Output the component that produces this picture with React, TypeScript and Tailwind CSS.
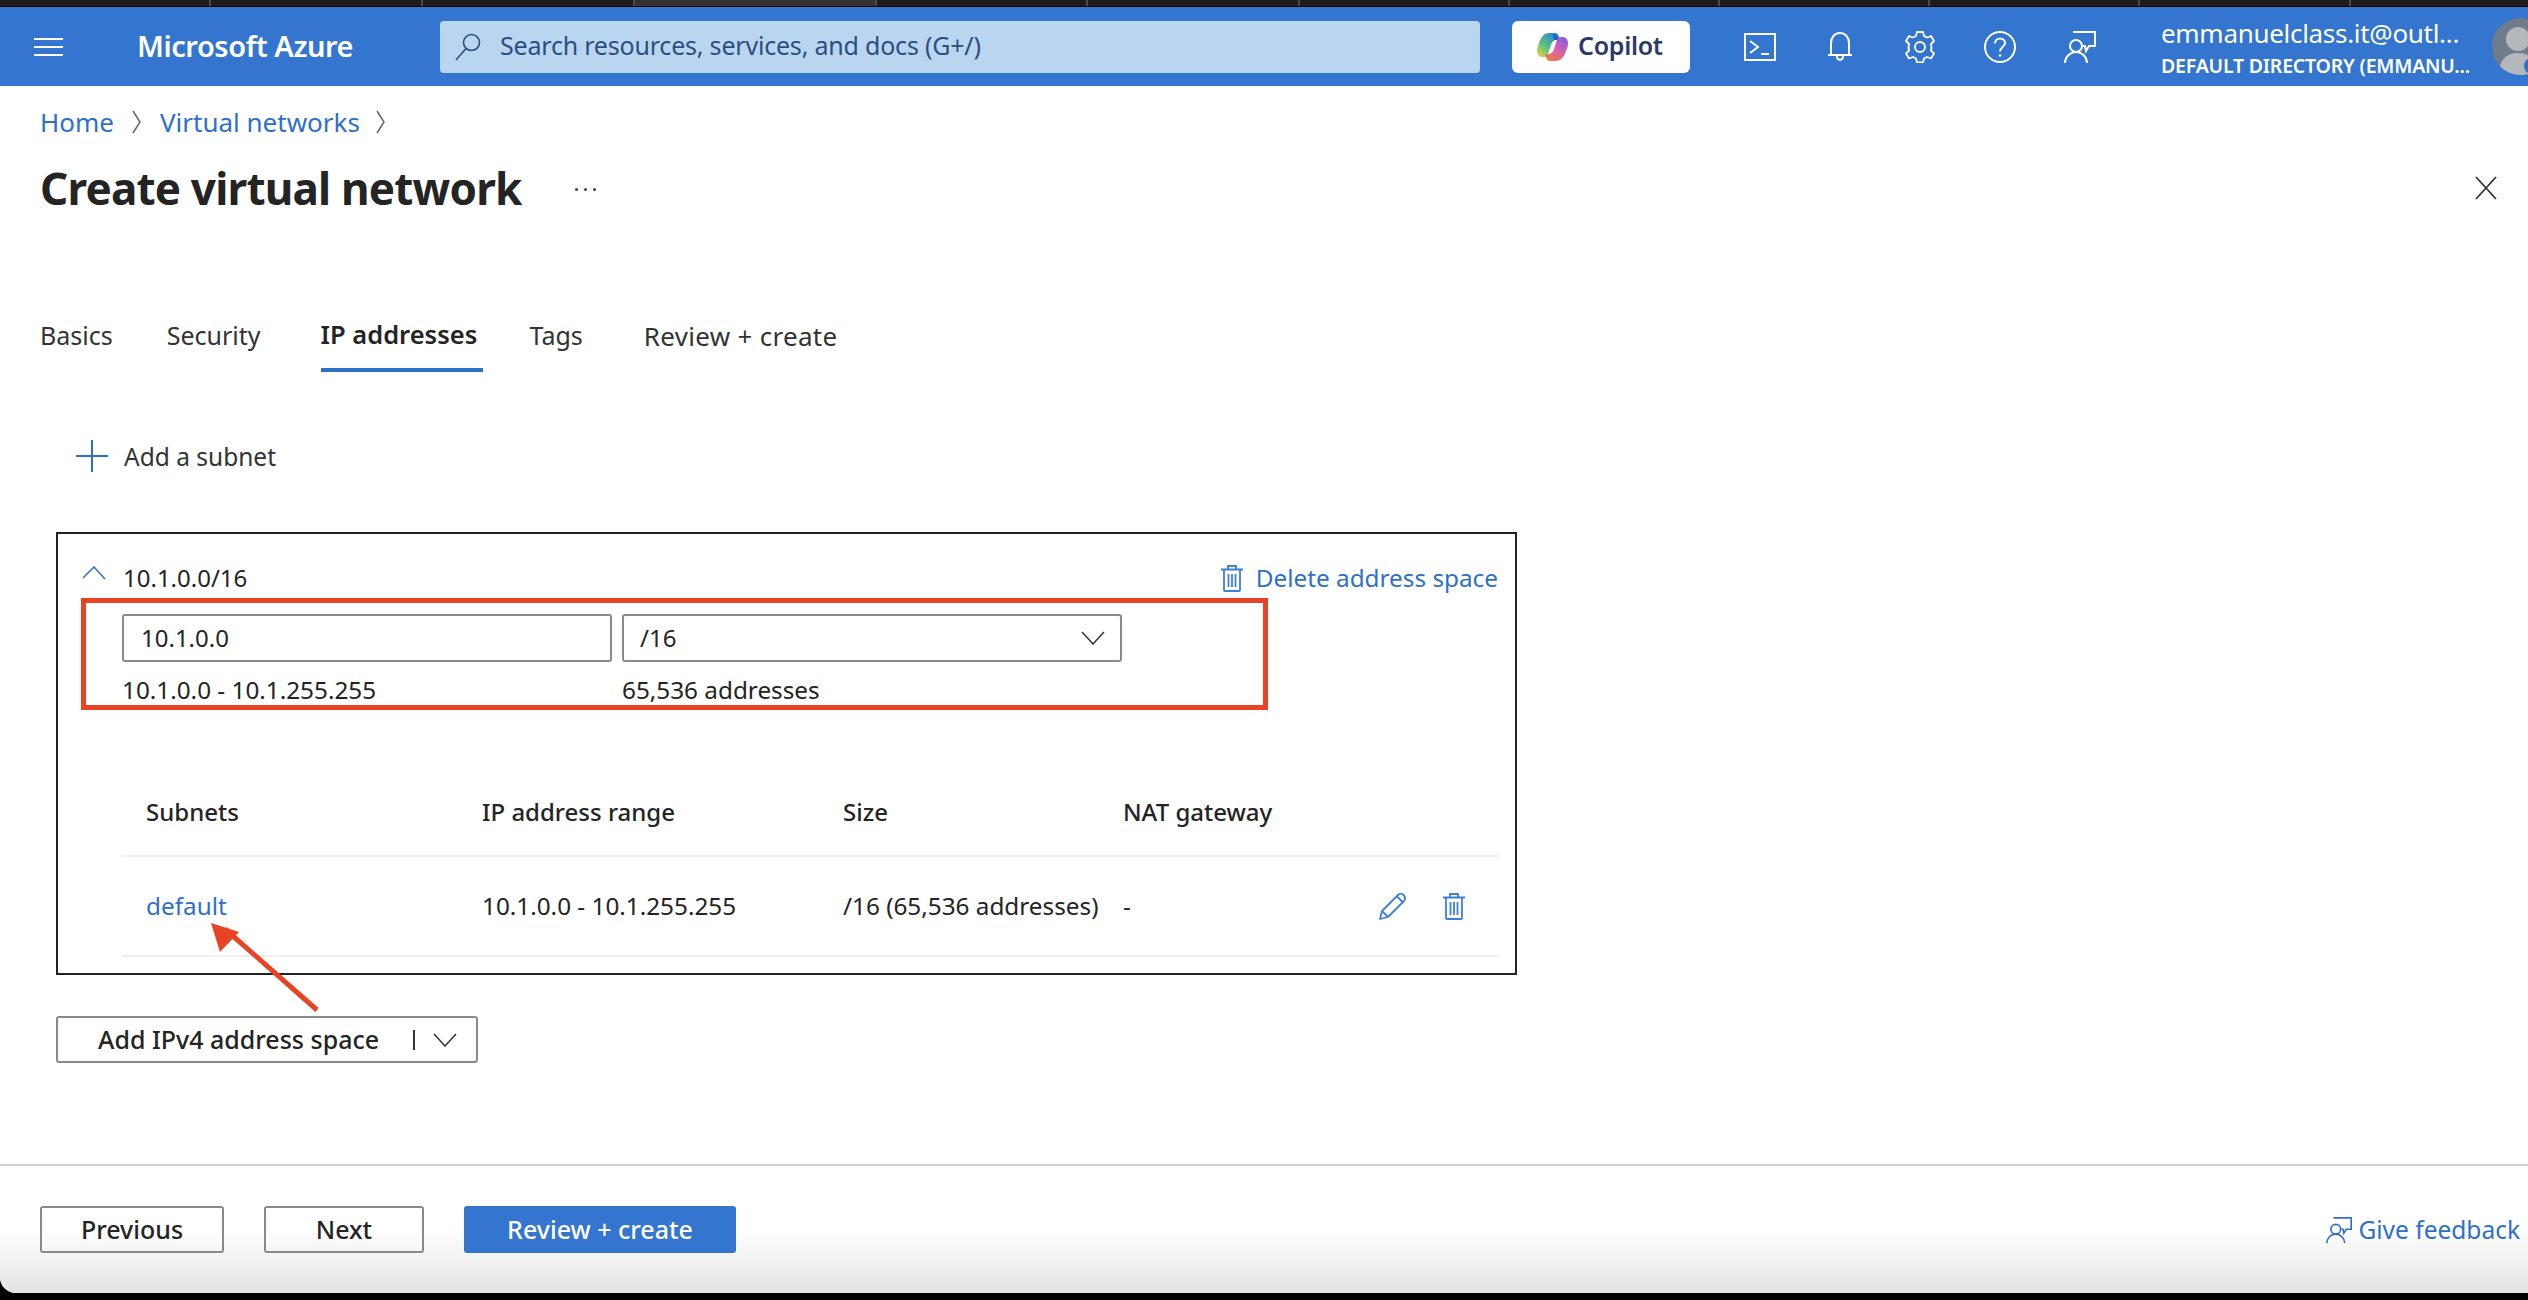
const chromeTabs = [211, 212, 212, 242, 211, 212, 210, 210, 210, 210, 211];
const tableCols = "grid-cols-[336px_361px_280px_1fr]";

function Menu() {
  return (
    <svg width="29" height="18" viewBox="0 0 29 18" fill="none" stroke="#fff" strokeWidth="2">
      <path d="M0 1h29M0 9h29M0 17h29" />
    </svg>
  );
}

function SearchIcon() {
  return (
    <svg className="shrink-0" width="26" height="28" viewBox="0 0 26 28" fill="none" stroke="#2b4f80" strokeWidth="1.6">
      <circle cx="16.5" cy="9.5" r="8" />
      <path d="M11 15.5 1 27" />
    </svg>
  );
}

function CopilotLogo() {
  return (
    <svg className="shrink-0" width="31" height="28" viewBox="0 0 31 28">
      <defs>
        <linearGradient id="cpA" x1="0" y1="1" x2="0.8" y2="0">
          <stop offset="0" stopColor="#f5d33f" />
          <stop offset="0.45" stopColor="#58c27d" />
          <stop offset="1" stopColor="#2a7fe0" />
        </linearGradient>
        <linearGradient id="cpB" x1="0.2" y1="1" x2="0.8" y2="0">
          <stop offset="0" stopColor="#ef7b3c" />
          <stop offset="0.5" stopColor="#d65fb0" />
          <stop offset="1" stopColor="#8a5ce0" />
        </linearGradient>
      </defs>
      <path d="M12 0h6c2 0 3 1 4 4l1 3c-5-1-8 1-9 5l-3 9c-1 2-2 3-4 3H5c-3 0-5-3-5-6 0-2 1-5 2-8 2-6 5-10 10-10z" fill="url(#cpA)" />
      <path d="M16 1c2 0 4 1 5 4l1 2h-5z" fill="#1f5fc8" />
      <path d="M19 28h-6c-2 0-3-1-4-4l-1-3c5 1 8-1 9-5l3-9c1-2 2-3 4-3h2c3 0 5 3 5 6 0 3-1 6-2 8-2 6-5 10-10 10z" fill="url(#cpB)" />
    </svg>
  );
}

function TerminalIcon() {
  return (
    <svg width="32" height="28" viewBox="0 0 32 28" fill="none" stroke="#fff" strokeWidth="2">
      <rect x="1" y="1" width="30" height="26" />
      <path d="m6 8 8 6-8 6M17 21h8" />
    </svg>
  );
}

function BellIcon() {
  return (
    <svg width="24" height="29" viewBox="0 0 24 29" fill="none" stroke="#fff" strokeWidth="2">
      <path d="M3 23V11C3 5 7 1 12 1s9 4 9 10v12M0 23h24M9 24c0 5 6 5 6 0" />
    </svg>
  );
}

function GearIcon() {
  return (
    <svg width="32" height="32" viewBox="0 0 32 32" fill="none" stroke="#fff" strokeWidth="1.8">
      <circle cx="16" cy="16" r="5" />
      <path d="M13 1h6l1 4 3 1.500 4-1.500 3 5-3 3 .5 3.500-.5 3 3 3-3 5-4-1.500-3 1.500-1 4h-6l-1-4-3-1.500-4 1.500-3-5 3-3-.5-3 .5-3.500-3-3 3-5 4 1.500 3-1.500z" strokeLinejoin="round" />
    </svg>
  );
}

function HelpIcon() {
  return (
    <svg width="32" height="32" viewBox="0 0 32 32" fill="none" stroke="#fff" strokeWidth="2">
      <circle cx="16" cy="16" r="15" />
      <path d="M11 12.500c0-3 2.200-5 5-5s5 2 5 4.500c0 4-5 4-5 8.500" />
      <circle cx="16" cy="24.500" r="1.300" fill="#fff" stroke="none" />
    </svg>
  );
}

function FeedbackIcon({ color, size }: { color: string; size: number }) {
  return (
    <svg className="shrink-0" width={size} height={size} viewBox="0 0 32 32" fill="none" stroke={color} strokeWidth="2">
      <path d="M9 1h22v14h-6l-3 5-1-5h-2" />
      <circle cx="12" cy="15" r="6" />
      <path d="M1 32c0-6 5-11 11-11s11 5 11 11" />
    </svg>
  );
}

function Avatar() {
  return (
    <svg className="shrink-0" width="57" height="57" viewBox="0 0 57 57">
      <defs>
        <clipPath id="av">
          <circle cx="28.500" cy="28.500" r="28.500" />
        </clipPath>
      </defs>
      <circle cx="28.500" cy="28.500" r="28.500" fill="#6f7c8b" />
      <g clipPath="url(#av)">
        <circle cx="26" cy="21" r="12" fill="#b4b7bb" />
        <path d="M7 57c0-15 7-22 19-22s19 7 19 22z" fill="#b4b7bb" />
      </g>
      <circle cx="40" cy="48" r="8" fill="#2f6fcc" />
    </svg>
  );
}

function Chevron({ dir, size = 24, color = "#333" }: { dir: "up" | "down" | "right"; size?: number; color?: string }) {
  const d = dir === "up" ? "M1 12 12 1l11 12" : dir === "down" ? "M1 1l11 12L23 1" : "M1 1l7 11-7 11";
  const vb = dir === "right" ? "0 0 9 24" : "0 0 24 14";
  const w = dir === "right" ? 9 : size;
  const h = dir === "right" ? 24 : (size * 14) / 24;
  return (
    <svg className="shrink-0" width={w} height={h} viewBox={vb} fill="none" stroke={color} strokeWidth="1.500">
      <path d={d} />
    </svg>
  );
}

function Trash() {
  return (
    <svg className="shrink-0" width="22" height="27" viewBox="0 0 22 27" fill="none" stroke="#3f7fdc" strokeWidth="1.800">
      <path d="M0 4.500h22M7 4V1h8v3M3 4.500V25a1 1 0 0 0 1 1h14a1 1 0 0 0 1-1V4.500M7.500 9v13M11 9v13M14.500 9v13" />
    </svg>
  );
}

function Pencil() {
  return (
    <svg width="27" height="27" viewBox="0 0 27 27" fill="none" stroke="#3f7fdc" strokeWidth="1.800" strokeLinejoin="round">
      <path d="M1 26 3 18 19 2c2-2 4-1.500 5.500 0S26.500 6 25 8L9 24zM3 18l6 6M18 3.500l5.500 5.500" />
    </svg>
  );
}

export default function App() {
  return (
    <div className="flex h-[1300px] w-[2528px] flex-col overflow-hidden bg-black font-['Noto_Sans',sans-serif] text-[24px] text-[#242424]">
      <div className="flex h-[6px] shrink-0 bg-[#1c1c1c]">
        {chromeTabs.map((w, i) => (
          <div
            key={i}
            style={{ width: w }}
            className={i === 3 ? "border-r-2 border-[#4a4a4a] bg-[#333]" : "border-r-2 border-[#4a4a4a]"}
          />
        ))}
      </div>
      <div className="h-px shrink-0 bg-black" />

      <header className="flex h-[79px] shrink-0 items-center overflow-hidden bg-[#3375cf] text-white">
        <div className="ml-[34px] flex shrink-0">
          <Menu />
        </div>
        <span className="-mt-[2px] ml-[74px] w-[216px] shrink-0 text-[29px] leading-none font-semibold tracking-[-0.45px] whitespace-nowrap">
          Microsoft Azure
        </span>
        <div className="ml-[87px] flex h-[52px] w-[1040px] shrink-0 items-center rounded bg-[#bad5f0] pl-[15px] text-[#2b4f80]">
          <SearchIcon />
          <span className="-mt-[2px] ml-[19px] text-[25px] tracking-[-0.2px]">Search resources, services, and docs (G+/)</span>
        </div>
        <div className="ml-[32px] flex h-[52px] w-[178px] shrink-0 items-center rounded-md bg-white pl-[25px]">
          <CopilotLogo />
          <span className="-mt-[2px] ml-[10px] text-[25px] font-semibold tracking-[-0.3px] text-[#2b3a66]">Copilot</span>
        </div>
        <div className="ml-[54px] flex w-[32px] shrink-0 justify-center">
          <TerminalIcon />
        </div>
        <div className="ml-[52px] flex w-[24px] shrink-0 justify-center">
          <BellIcon />
        </div>
        <div className="ml-[52px] flex w-[32px] shrink-0 justify-center">
          <GearIcon />
        </div>
        <div className="ml-[48px] flex w-[32px] shrink-0 justify-center">
          <HelpIcon />
        </div>
        <div className="ml-[48px] flex w-[32px] shrink-0 justify-center">
          <FeedbackIcon color="#fff" size={32} />
        </div>
        <div className="ml-[65px] flex w-[331px] shrink-0 flex-col pt-[2px]">
          <span className="text-[26px] leading-[34px] tracking-[-0.3px] whitespace-nowrap">emmanuelclass.it@outl...</span>
          <span className="mt-[3px] text-[19.5px] leading-[26px] font-semibold tracking-[-0.2px] whitespace-nowrap">
            DEFAULT DIRECTORY (EMMANU...
          </span>
        </div>
        <Avatar />
      </header>

      <main className="relative flex min-h-0 flex-1 flex-col overflow-hidden rounded-bl-[16px] bg-white">
        <nav className="mt-[21px] flex h-[30px] items-center pl-[40px] text-[26px] text-[#2f6fcc]">
          <span>Home</span>
          <span className="mr-[19px] ml-[18px] flex">
            <Chevron dir="right" color="#666" />
          </span>
          <span>Virtual networks</span>
          <span className="ml-[16px] flex">
            <Chevron dir="right" color="#666" />
          </span>
        </nav>

        <div className="mt-[23px] flex h-[56px] items-center pr-[31px] pl-[40px]">
          <h1 className="text-[44px] leading-none font-bold tracking-[-0.8px] whitespace-nowrap text-[#242424]">Create virtual network</h1>
          <span className="ml-[53px] flex gap-[6px] pt-[3px]">
            <i className="h-[3px] w-[3px] rounded-full bg-[#444]" />
            <i className="h-[3px] w-[3px] rounded-full bg-[#444]" />
            <i className="h-[3px] w-[3px] rounded-full bg-[#444]" />
          </span>
          <svg className="ml-auto" width="22" height="24" viewBox="0 0 22 24" fill="none" stroke="#333" strokeWidth="1.800">
            <path d="m1 1 20 22M21 1 1 23" />
          </svg>
        </div>

        <div className="mt-[92px] flex h-[64px] pl-[40px] text-[25px] text-[#333]">
          <span className="pt-[9px]">Basics</span>
          <span className="ml-[54px] pt-[9px]">Security</span>
          <span className="ml-[60px] w-[162px] border-b-4 border-[#2f6fcc] pt-[7px] text-[25.5px] font-semibold whitespace-nowrap text-[#242424]">
            IP addresses
          </span>
          <span className="ml-[47px] pt-[9px]">Tags</span>
          <span className="ml-[61px] pt-[9px] text-[26px] tracking-[0.3px]">Review + create</span>
        </div>

        <div className="mt-[68px] flex h-[32px] items-center pl-[76px] text-[#333]">
          <svg width="32" height="32" viewBox="0 0 32 32" fill="none" stroke="#2f6fcc" strokeWidth="2">
            <path d="M16 0v32M0 16h32" />
          </svg>
          <span className="mt-[3px] ml-[16px] text-[24.5px]">Add a subnet</span>
        </div>

        <section className="mt-[60px] ml-[56px] flex h-[443px] w-[1461px] flex-col border-2 border-[#222]">
          <div className="mt-[27px] flex h-[34px] items-center pr-[17px] pl-[24px]">
            <span className="-mt-[10px] flex">
              <Chevron dir="up" color="#2f6fcc" />
            </span>
            <span className="ml-[17px]">10.1.0.0/16</span>
            <span className="ml-auto flex items-center text-[24.3px] text-[#2f6fcc]">
              <Trash />
              <span className="ml-[13px]">Delete address space</span>
            </span>
          </div>

          <div className="mt-[3px] ml-[23px] flex h-[112px] w-[1187px] flex-col border-[5px] border-[#e94326] pt-[11px] pl-[36px]">
            <div className="flex gap-[10px]">
              <div className="flex h-[48px] w-[490px] items-center rounded-[3px] border-2 border-[#8a8a8a] pl-[17px]">10.1.0.0</div>
              <div className="flex h-[48px] w-[500px] items-center justify-between rounded-[3px] border-2 border-[#8a8a8a] pr-[15px] pl-[16px]">
                /16
                <Chevron dir="down" />
              </div>
            </div>
            <div className="mt-[10px] flex text-[24.3px]">
              <span className="w-[500px]">10.1.0.0 - 10.1.255.255</span>
              <span>65,536 addresses</span>
            </div>
          </div>

          <div className="mt-[77px] ml-[64px] w-[1376px]">
            <div className={`grid h-[70px] ${tableCols} items-center border-b-2 border-[#efefef] pb-[18px] pl-[24px] font-medium`}>
              <span>Subnets</span>
              <span>IP address range</span>
              <span>Size</span>
              <span>NAT gateway</span>
            </div>
            <div className={`grid h-[100px] ${tableCols} items-center border-b-2 border-[#efefef] pl-[24px] text-[24.3px]`}>
              <span className="text-[#2f6fcc]">default</span>
              <span>10.1.0.0 - 10.1.255.255</span>
              <span>/16 (65,536 addresses)</span>
              <div className="flex items-center justify-between pr-[33px]">
                <span>-</span>
                <span className="flex items-center gap-[37px]">
                  <Pencil />
                  <Trash />
                </span>
              </div>
            </div>
          </div>
        </section>

        <button className="mt-[41px] ml-[56px] flex h-[47px] w-[422px] items-center rounded-[3px] border-2 border-[#8a8a8a] pl-[40px] text-[25px] font-medium text-[#242424]">
          Add IPv4 address space
          <span className="ml-[34px] h-[20px] w-[2px] bg-[#333]" />
          <span className="ml-[18px] flex">
            <Chevron dir="down" />
          </span>
        </button>

        <footer className="mt-[101px] flex min-h-0 flex-1 items-start border-t-2 border-[#d0d0d0] bg-gradient-to-b from-white from-50% to-[#e3e3e3] pt-[40px] pr-[8px] pl-[40px] text-[25px]">
          <button className="h-[47px] w-[184px] rounded-[3px] border-2 border-[#8a8a8a] font-medium">Previous</button>
          <button className="ml-[40px] h-[47px] w-[160px] rounded-[3px] border-2 border-[#8a8a8a] font-medium">Next</button>
          <button className="ml-[40px] h-[47px] w-[272px] rounded-[3px] bg-[#3375cf] font-medium text-white">Review + create</button>
          <span className="mt-[6px] ml-auto flex items-center text-[24.5px] text-[#2f6fcc]">
            <FeedbackIcon color="#2f6fcc" size={26} />
            <span className="ml-[6px]">Give feedback</span>
          </span>
        </footer>

        <svg className="absolute top-[828px] left-[200px]" width="130" height="100" viewBox="0 0 130 100">
          <path d="M117 96 25 15" stroke="#e94326" strokeWidth="5" fill="none" />
          <path d="M11 9 39 18 20 38z" fill="#e94326" />
        </svg>
      </main>
      <div className="h-[7px] shrink-0 bg-black" />
    </div>
  );
}
